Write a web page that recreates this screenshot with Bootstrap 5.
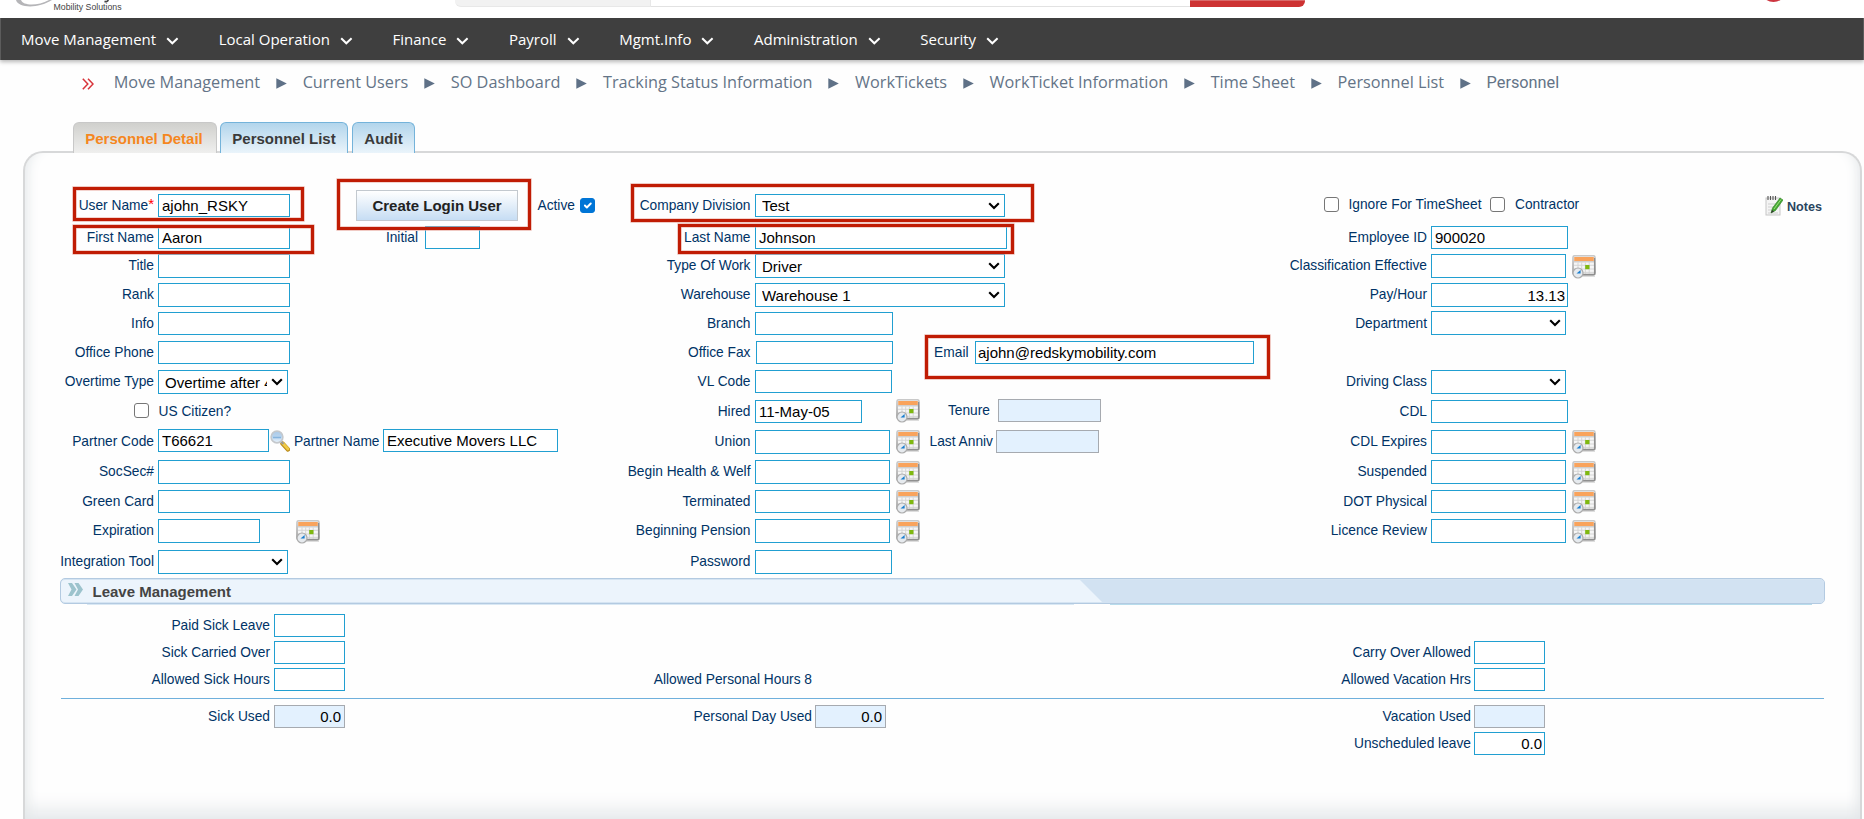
<!DOCTYPE html>
<html lang="en">
<head>
<meta charset="utf-8">
<meta name="viewport" content="width=device-width, initial-scale=1">
<title>Personnel Detail</title>
<link href="https://cdn.jsdelivr.net/npm/bootstrap@5.3.0/dist/css/bootstrap.min.css" rel="stylesheet">
<style>
  body { font-family: "Liberation Sans", Arial, sans-serif; font-size: 13.75px; color: #003366; background: #fefefe; height: 819px; overflow: hidden; }

  /* top strip */
  .top-strip { height: 18px; background: #fff; overflow: hidden; }
  .brand-sub { left: 53.5px; top: 1px; font-size: 8.75px; line-height: 12px; color: #444; }
  .search-strip { margin-left: 455px; height: 7px; width: 850px; }
  .search-cat { width: 196px; background: #f2f2f2; border: solid #e8e8e8; border-width: 0 1px 1px 0; border-bottom-left-radius: 6px; }
  .search-box { border-bottom: 1px solid #e2e2e2; }
  .search-go { width: 115px; background: #cd3232; border-bottom-right-radius: 6px; border-top: 1px solid #d96a6a; }

  /* main menu */
  .main-menu { height: 42px; background: #3f3f3f; box-shadow: 0 2px 4px rgba(0,0,0,.28); padding: 0 0 0 20px; gap: 39.6px; font: 15px "Open Sans", sans-serif; border: solid #5c5c5c; border-width: 0 1px; }
  .main-menu a { color: #fff; text-decoration: none; gap: 10px; }
  .main-menu svg { margin-top: 3px; }

  /* trail */
  .trail { height: 62px; padding: 0 0 19px 82px; gap: 15.75px; font: 16.25px "Open Sans", sans-serif; color: #647487; }
  .trail svg { flex: none; margin-top: 4px; }
  .trail .here { font-family: Roboto, sans-serif; font-size: 16.3px; margin-top: 2px; }

  /* tabs */
  .tab-strip { padding-left: 73px; gap: 4px; height: 31px; z-index: 2; }
  .tab-strip a { font-weight: 700; font-size: 15px; line-height: 31px; height: 31px; padding: 0; text-align: center; text-decoration: none; color: #3a3a3a; border: 1px solid #74b3da; border-bottom: 0; border-radius: 6px 6px 0 0; background: linear-gradient(#b2d5ec, #eaf4fb); width: 128px; }
  .tab-strip a.on { color: #f5871f; border-color: #c8c8c8; background: linear-gradient(#d0d0cd, #efefee); width: 144px; margin-right: -1px; padding-right: 2px; }
  .tab-strip a.short { width: 63px; }

  /* panel */
  .sheet { margin: -2px 2px 0 23px; height: 668px; border: 2px solid #d7d8d9; border-bottom: 0; border-radius: 20px 20px 0 0; padding: 41px 35px 0 35px; background: #fefefe; box-shadow: inset 13px 0 14px -12px #e2e6e8, inset -13px 0 14px -12px #e2e6e8, inset 0 -20px 22px -13px #e0e4e7; }
  .entry { display: grid; grid-template-columns: 540px 660px 1fr; grid-template-rows: 32px 28px 29px 29px 29px 29px 30px 30px 30px 30px 29px 31px 28px; }
  .cell { display: flex; align-items: flex-start; white-space: nowrap; }
  .cell label, .cell .txt { line-height: 23px; flex: none; }
  .la { width: 94px; margin-right: 4px; display: flex; justify-content: flex-end; }
  .lb { width: 150.5px; margin-right: 4.5px; text-align: right; }
  .lc { width: 167px; margin-right: 4px; text-align: right; }
  .box { flex: none; height: 23px; border: 1px solid #219fd1; border-radius: 0; background-color: #fff; color: #000; font-size: 15px; line-height: 21px; padding: 0 3px; }
  .box:focus { box-shadow: none; }
  .tall { height: 24px; }
  .snug { padding: 0 2px; }
  .ro { border-color: #a6aab0; background-color: #e3f1fe; }
  .num { text-align: right; }
  select.box { padding: 0 20px 0 6px; background-image: url("data:image/svg+xml,%3Csvg xmlns='http://www.w3.org/2000/svg' viewBox='0 0 12 8'%3E%3Cpath d='M1.2 1.3 6 6.1l4.8-4.8' fill='none' stroke='%23000' stroke-width='2.1'/%3E%3C/svg%3E"); background-size: 12px 8px; background-position: right 4px center; background-repeat: no-repeat; text-overflow: clip; }
  .w55 { width: 55px; } .w71 { width: 71px; } .w102 { width: 102px; } .w103 { width: 103px; } .w107 { width: 107px; } .w111 { width: 111px; }
  .w130 { width: 130px; } .w132 { width: 132px; } .w135 { width: 135px; } .w137 { width: 137px; } .w138 { width: 138px; }
  .w175 { width: 175px; } .w250 { width: 250px; } .w252 { width: 252px; } .w279 { width: 279px; }
  .up1 { margin-top: -1px; } .down1 { margin-top: 1px; }
  .cal { width: 24px; height: 24px; flex: none; margin-left: 6px; }
  .cal.far { margin-left: 34px; } .cal.farther { margin-left: 36px; }
  .tick { width: 15px; height: 15px; flex: none; margin: 3px 0 0; border: 1px solid #767676; }
  .form-check-input.tick[type=checkbox] { border-radius: 3px; }
  .tick:checked { background-color: #0075d6; border-color: #0075d6; }
  .tick.active-tick { margin: 4px 0 0 5.500px; }
  .login-btn { width: 162px; height: 31px; margin: -4px 19.5px 0 66px; border: 1px solid #c3c9cf; border-radius: 0; padding: 0; font-size: 15px; line-height: 29px; font-weight: 700; color: #222; background: linear-gradient(#fff, #e3eef9 50%, #c6ddf4); }
  .star { color: #f00; font-size: 15px; line-height: 19px; }
  .notes { gap: 4px; font-size: 12.6px; font-weight: 700; color: #2a4560; margin-right: 3px; height: 23px; }
  .notes .txt { margin-top: 4px; }

  /* spacing of the secondary fields */
  .initial { width: 128px; text-align: right; margin-right: 7px; }
  .mail { width: 75.5px; text-align: right; margin-right: 6.5px; }
  .fax { margin-left: 1px; width: 137px; }
  .tenure { width: 70px; text-align: right; margin-right: 8px; }
  .anniv { width: 73px; text-align: right; margin-right: 3px; }
  .pname { width: 89.5px; text-align: right; margin-right: 3.5px; }
  .lens { margin-left: 1px; }
  .c-first { margin-left: 64px; }
  .c-next { margin-left: 9px; }
  .c-text { margin-left: 9.5px; }
  .citizen { margin-left: 74px; }

  /* section bar */
  .bar-head { position: relative; height: 26px; border: 1px solid #b3cae1; border-radius: 5px; padding-left: 7px; gap: 9.5px; font-size: 15px; font-weight: 700; color: #444; background: #ecf4fc; overflow: hidden; box-shadow: inset 0 1px 0 #d5e4f2, inset 0 -1px 0 #d5e4f2; }
  .bar-head span { margin-top: 2px; }
  .bar-fill { position: absolute; left: 1019px; right: 0; top: 1px; bottom: 0; background: #d2e2f2; clip-path: polygon(0 0, 100% 0, 100% 100%, 23px 100%); }
  .bar-under { height: 1px; margin: 0 13px 9px 27px; }
  .bar-under i { height: 1px; background: #d9e8f4; width: 987px; }
  .bar-under i + i { background: #b7dcec; width: 702px; }

  .leave { display: grid; grid-template-columns: 540px 660px 1fr; grid-template-rows: 27px 27px 30px 7px 27px 27px; }
  .ll { width: 210px; margin-right: 4px; text-align: right; }
  .lm { width: 212px; margin-right: 3px; text-align: right; }
  .lr { width: 211px; margin-right: 3px; text-align: right; }
  .rule { grid-column: 1 / -1; height: 1px; background: #6fb0dc; margin: 0 1px; }

  /* red call-outs laid over the fields */
  .callout { position: absolute; border: 3px solid #c01c04; box-shadow: 0 0 0 .6px #e7a79d, inset 0 0 0 .6px #e7a79d; pointer-events: none; }
  .k1 { left: 48px; top: 34px; width: 231px; height: 34px; }
  .k2 { left: 48px; top: 72px; width: 241px; height: 29px; }
  .k3 { left: 312px; top: 26px; width: 194px; height: 51px; }
  .k4 { left: 606px; top: 31px; width: 403px; height: 38px; }
  .k5 { left: 653px; top: 71px; width: 336px; height: 30px; }
  .k6 { left: 900px; top: 182px; width: 345px; height: 44px; }
</style>
<script src="https://cdn.jsdelivr.net/npm/bootstrap@5.3.0/dist/js/bootstrap.bundle.min.js"></script>
</head>
<body>

<svg width="0" height="0" class="position-absolute" aria-hidden="true">
  <defs>
    <linearGradient id="frame" x1="0" y1="0" x2="0" y2="1"><stop offset="0" stop-color="#c9c9c9"/><stop offset="1" stop-color="#8e8e8e"/></linearGradient>
    <linearGradient id="glass" x1="0" y1="0" x2="0" y2="1"><stop offset="0" stop-color="#a9c9e8"/><stop offset=".5" stop-color="#b9d4ee"/><stop offset="1" stop-color="#eef6fd"/></linearGradient>
    <symbol id="cal" viewBox="0 0 24 24">
      <path d="M2 21h21" stroke="#ddd" stroke-width="2"/>
      <rect x="1" y=".7" width="22" height="19" rx="1.6" fill="#f6f6f6" stroke="url(#frame)" stroke-width="1.5"/>
      <rect x="2.2" y="2" width="19.6" height="4" fill="#f9a35c"/>
      <rect x="2" y="6" width="20" height="1.5" fill="#cfcfcf"/>
      <path d="M2 10.3h20M2 14h20M2 17.4h20M6 7.5v11M9.7 7.5v11M13.4 7.5v11M17.2 7.5v11" stroke="#d2d2d2" stroke-width=".9"/>
      <path d="M22.6 3v16.3H11" fill="none" stroke="#8f8f8f" stroke-width="1.3"/>
      <rect x="13.2" y="10" width="4.3" height="4.2" fill="#7fb810"/>
      <circle cx="6" cy="18" r="5" fill="#e6eaee" stroke="#acacac" stroke-width="1.2"/>
      <path d="M6 18.500h2.600V15L4.500 18.500z" fill="#1b7fd0"/>
    </symbol>
    <symbol id="chev" viewBox="0 0 13 8"><path d="M1.2 1.2 6.3 6.3 11.6 1.2" fill="none" stroke="#fff" stroke-width="2"/></symbol>
    <symbol id="tri" viewBox="0 0 11 11"><path d="M.3.2 10.8 5.5.3 10.8z" fill="#5f7187"/></symbol>
  </defs>
</svg>

<header class="top-strip position-relative">
  <svg class="position-absolute top-0 start-0" width="120" height="8" viewBox="0 0 120 8" aria-hidden="true">
    <path d="M16 0C18 8 38 9 52 0h-3C38 6 23 6 21 0z" fill="#b5b5b8"/>
    <path d="M104.5 1.3Q107.3 2.4 108.2 0" fill="none" stroke="#444" stroke-width="1.8"/>
  </svg>
  <span class="brand-sub position-absolute">Mobility Solutions</span>
  <div class="search-strip d-flex">
    <div class="search-cat"></div><div class="search-box flex-grow-1"></div><div class="search-go"></div>
  </div>
  <svg class="position-absolute top-0 start-0" width="1864" height="3" aria-hidden="true"><circle cx="1773.5" cy="-11" r="13" fill="#cd3540"/></svg>
</header>

<nav class="main-menu d-flex align-items-center">
  <a href="#" class="d-flex align-items-center">Move Management<svg width="13" height="8"><use href="#chev"/></svg></a>
  <a href="#" class="d-flex align-items-center">Local Operation<svg width="13" height="8"><use href="#chev"/></svg></a>
  <a href="#" class="d-flex align-items-center">Finance<svg width="13" height="8"><use href="#chev"/></svg></a>
  <a href="#" class="d-flex align-items-center">Payroll<svg width="13" height="8"><use href="#chev"/></svg></a>
  <a href="#" class="d-flex align-items-center">Mgmt.Info<svg width="13" height="8"><use href="#chev"/></svg></a>
  <a href="#" class="d-flex align-items-center">Administration<svg width="13" height="8"><use href="#chev"/></svg></a>
  <a href="#" class="d-flex align-items-center">Security<svg width="13" height="8"><use href="#chev"/></svg></a>
</nav>

<div class="trail d-flex align-items-center text-nowrap">
  <svg width="12" height="12" viewBox="0 0 12 12" class="me-1"><path d="M.8.8 5.8 6 .8 11.2M6 .8 11 6 6 11.2" fill="none" stroke="#d8343a" stroke-width="1.5"/></svg>
  <span>Move Management</span><svg width="11" height="11"><use href="#tri"/></svg>
  <span>Current Users</span><svg width="11" height="11"><use href="#tri"/></svg>
  <span>SO Dashboard</span><svg width="11" height="11"><use href="#tri"/></svg>
  <span>Tracking Status Information</span><svg width="11" height="11"><use href="#tri"/></svg>
  <span>WorkTickets</span><svg width="11" height="11"><use href="#tri"/></svg>
  <span>WorkTicket Information</span><svg width="11" height="11"><use href="#tri"/></svg>
  <span>Time Sheet</span><svg width="11" height="11"><use href="#tri"/></svg>
  <span>Personnel List</span><svg width="11" height="11"><use href="#tri"/></svg>
  <span class="here">Personnel</span>
</div>

<div class="tab-strip d-flex position-relative">
  <a href="#" class="on">Personnel Detail</a><a href="#">Personnel List</a><a href="#" class="short">Audit</a>
</div>

<main class="sheet position-relative">
  <form class="entry">
    <div class="cell"><label class="la">User Name<span class="star">*</span></label><input class="form-control box w132" value="ajohn_RSKY"><button type="button" class="btn login-btn">Create Login User</button><label>Active</label><input type="checkbox" class="form-check-input tick active-tick" checked></div>
    <div class="cell"><label class="lb">Company Division</label><select class="form-select box w250"><option>Test</option></select></div>
    <div class="cell"><input type="checkbox" class="form-check-input tick c-first"><label class="up1 c-text">Ignore For TimeSheet</label><input type="checkbox" class="form-check-input tick c-next"><label class="up1 c-text">Contractor</label>
      <a href="#" class="notes d-flex align-items-center ms-auto text-decoration-none"><svg width="18" height="21" viewBox="0 0 18 21"><rect x="1" y="3" width="14" height="17" fill="#f4f4f4" stroke="#c6c6c6"/><path d="M3 1v4M5.5 1v4M8 1v4M10.5 1v4" stroke="#555" stroke-width="1.1"/><path d="M3 9h8M3 12h6M3 15h5M3 18h10" stroke="#cfcfcf"/><path d="M6 18l1.5-5L15 3l3 2L10.5 15.5z" fill="#46a832" stroke="#2c7d20" stroke-width=".6"/><path d="M9 14 16 4.500" stroke="#9be07e" stroke-width="1"/><path d="M6 18l1-3 2 1.5z" fill="#333"/></svg><span class="txt">Notes</span></a></div>

    <div class="cell"><label class="la">First Name</label><input class="form-control box w132" value="Aaron"><label class="initial">Initial</label><input class="form-control box w55"></div>
    <div class="cell"><label class="lb">Last Name</label><input class="form-control box w252" value="Johnson"></div>
    <div class="cell"><label class="lc">Employee ID</label><input class="form-control box w137" value="900020"></div>

    <div class="cell"><label class="la">Title</label><input class="form-control box tall w132"></div>
    <div class="cell"><label class="lb">Type Of Work</label><select class="form-select box tall w250"><option>Driver</option></select></div>
    <div class="cell"><label class="lc">Classification Effective</label><input class="form-control box tall w135"><svg class="cal down1"><use href="#cal"/></svg></div>

    <div class="cell"><label class="la">Rank</label><input class="form-control box tall w132"></div>
    <div class="cell"><label class="lb">Warehouse</label><select class="form-select box tall w250"><option>Warehouse 1</option></select></div>
    <div class="cell"><label class="lc">Pay/Hour</label><input class="form-control box tall num snug w137" value="13.13"></div>

    <div class="cell"><label class="la">Info</label><input class="form-control box w132"></div>
    <div class="cell"><label class="lb">Branch</label><input class="form-control box w138"></div>
    <div class="cell"><label class="lc">Department</label><select class="form-select box tall up1 w135"><option></option></select></div>

    <div class="cell"><label class="la">Office Phone</label><input class="form-control box w132"></div>
    <div class="cell"><label class="lb">Office Fax</label><input class="form-control box fax"><label class="mail">Email</label><input class="form-control box snug w279" value="ajohn@redskymobility.com"></div>
    <div class="cell"></div>

    <div class="cell"><label class="la">Overtime Type</label><select class="form-select box tall w130"><option>Overtime after 40 Hours</option></select></div>
    <div class="cell"><label class="lb">VL Code</label><input class="form-control box w137"></div>
    <div class="cell"><label class="lc">Driving Class</label><select class="form-select box tall w135"><option></option></select></div>

    <div class="cell"><input type="checkbox" class="form-check-input tick citizen"><label class="c-text">US Citizen?</label></div>
    <div class="cell"><label class="lb">Hired</label><input class="form-control box w107" value="11-May-05"><svg class="cal up1 far"><use href="#cal"/></svg><label class="tenure up1">Tenure</label><input class="form-control box ro up1 w103" readonly></div>
    <div class="cell"><label class="lc">CDL</label><input class="form-control box w137"></div>

    <div class="cell"><label class="la">Partner Code</label><input class="form-control box up1 w111" value="T66621"><svg class="lens" width="20" height="22" viewBox="0 0 20 22"><path d="M12.500 13.500 18 19.500" stroke="#b98a1c" stroke-width="4.400" stroke-linecap="round"/><path d="M12.700 13.200 18 19" stroke="#f0cb45" stroke-width="2.800" stroke-linecap="round"/><path d="M10.500 11l3 3" stroke="#999" stroke-width="2"/><circle cx="7" cy="7" r="5.900" fill="url(#glass)" stroke="#c4c8cc" stroke-width="1.600"/><path d="M3 7.500h8" stroke="#86b4de" stroke-width="1.500"/></svg><label class="pname">Partner Name</label><input class="form-control box up1 w175" value="Executive Movers LLC"></div>
    <div class="cell"><label class="lb">Union</label><input class="form-control box tall w135"><svg class="cal"><use href="#cal"/></svg><label class="anniv">Last Anniv</label><input class="form-control box ro w103" readonly></div>
    <div class="cell"><label class="lc">CDL Expires</label><input class="form-control box tall w135"><svg class="cal"><use href="#cal"/></svg></div>

    <div class="cell"><label class="la">SocSec#</label><input class="form-control box tall w132"></div>
    <div class="cell"><label class="lb">Begin Health &amp; Welf</label><input class="form-control box tall w135"><svg class="cal down1"><use href="#cal"/></svg></div>
    <div class="cell"><label class="lc">Suspended</label><input class="form-control box tall w135"><svg class="cal down1"><use href="#cal"/></svg></div>

    <div class="cell"><label class="la">Green Card</label><input class="form-control box w132"></div>
    <div class="cell"><label class="lb">Terminated</label><input class="form-control box w135"><svg class="cal"><use href="#cal"/></svg></div>
    <div class="cell"><label class="lc">DOT Physical</label><input class="form-control box w135"><svg class="cal"><use href="#cal"/></svg></div>

    <div class="cell"><label class="la">Expiration</label><input class="form-control box tall w102"><svg class="cal down1 farther"><use href="#cal"/></svg></div>
    <div class="cell"><label class="lb">Beginning Pension</label><input class="form-control box tall w135"><svg class="cal down1"><use href="#cal"/></svg></div>
    <div class="cell"><label class="lc">Licence Review</label><input class="form-control box tall w135"><svg class="cal down1"><use href="#cal"/></svg></div>

    <div class="cell"><label class="la">Integration Tool</label><select class="form-select box tall w130"><option></option></select></div>
    <div class="cell"><label class="lb">Password</label><input class="form-control box tall w137"></div>
    <div class="cell"></div>
  </form>

  <div class="bar-head d-flex align-items-center"><div class="bar-fill"></div>
    <svg width="15" height="13" viewBox="0 0 15 13" class="mb-1"><path d="M0 0h4l4.500 6.500L4 13H0l3.500-6.500zM6.500 0h4L15 6.500 10.500 13h-4L10 6.500z" fill="#9cc3cd"/></svg><span>Leave Management</span>
  </div>
  <div class="bar-under d-flex justify-content-between"><i></i><i></i></div>

  <div class="leave">
    <div class="cell"><label class="ll">Paid Sick Leave</label><input class="form-control box w71"></div><div></div><div></div>
    <div class="cell"><label class="ll">Sick Carried Over</label><input class="form-control box w71"></div><div></div>
    <div class="cell"><label class="lr">Carry Over Allowed</label><input class="form-control box w71"></div>
    <div class="cell"><label class="ll">Allowed Sick Hours</label><input class="form-control box w71"></div>
    <div class="cell"><span class="txt lm">Allowed Personal Hours 8</span></div>
    <div class="cell"><label class="lr">Allowed Vacation Hrs</label><input class="form-control box w71"></div>
    <div class="rule"></div>
    <div class="cell"><label class="ll">Sick Used</label><input class="form-control box ro num w71" value="0.0" readonly></div>
    <div class="cell"><label class="lm">Personal Day Used</label><input class="form-control box ro num w71" value="0.0" readonly></div>
    <div class="cell"><label class="lr">Vacation Used</label><input class="form-control box ro w71" readonly></div>
    <div></div><div></div>
    <div class="cell"><label class="lr">Unscheduled leave</label><input class="form-control box num snug w71" value="0.0"></div>
  </div>

  <div class="callout k1"></div><div class="callout k2"></div><div class="callout k3"></div>
  <div class="callout k4"></div><div class="callout k5"></div><div class="callout k6"></div>
</main>
</body>
</html>
